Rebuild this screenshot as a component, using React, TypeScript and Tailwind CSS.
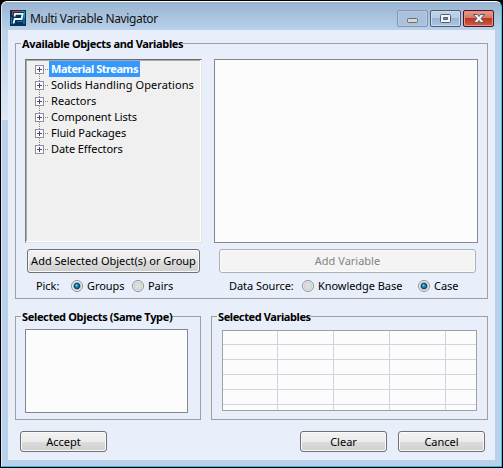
import React from "react";

function Group({ title, tracking, className, children }: { title: string; tracking: string; className: string; children: React.ReactNode }) {
  return (
    <section className={`relative shrink-0 border border-[#a0a0a0] ${className}`}>
      <h2 className={`absolute left-[5px] -top-[8px] h-4 whitespace-nowrap bg-[#e8effa] pl-px text-[11px] font-bold leading-4 text-black ${tracking}`}>{title}</h2>
      {children}
    </section>
  );
}

function Button({ label, className, disabled = false }: { label: string; className: string; disabled?: boolean }) {
  const look = disabled
    ? "border-[#adb2b5] bg-[#f4f4f4] text-[#838383]"
    : "border-[#707070] bg-[linear-gradient(#f2f2f2,#ebebeb_50%,#dddddd_50%,#cfcfcf)] text-black";
  return (
    <button disabled={disabled} className={`flex shrink-0 items-center justify-center whitespace-nowrap rounded-[3px] border text-[11px] leading-4 shadow-[inset_0_0_0_1px_#fafafa] ${look} ${className}`}>
      {label}
    </button>
  );
}

function Radio({ checked = false, className }: { checked?: boolean; className: string }) {
  return (
    <svg className={`h-3 w-3 shrink-0 ${className}`} viewBox="0 0 12 12">
      <circle cx="6" cy="6" r="5.5" fill="#f6f6f6" stroke="#8b8f94" />
      <circle cx="6" cy="6" r="3.8" fill={checked ? "#d5e5ee" : "#dedede"} stroke={checked ? "#a9b9c4" : "#c4c7ca"} strokeWidth="0.8" />
      {checked && <circle cx="6" cy="6" r="2.8" fill="#1479ab" stroke="#123c5b" />}
      {checked && <circle cx="5.5" cy="5.4" r="1.1" fill="#5ecbf0" />}
    </svg>
  );
}

const tree = [
  { name: "Material Streams", tracking: "tracking-[-0.45px]" },
  { name: "Solids Handling Operations", tracking: "tracking-[0.08px]" },
  { name: "Reactors", tracking: "tracking-[0.05px]" },
  { name: "Component Lists", tracking: "tracking-[-0.08px]" },
  { name: "Fluid Packages", tracking: "tracking-[-0.08px]" },
  { name: "Date Effectors", tracking: "tracking-[-0.08px]" },
];

function Expander({ first, last }: { first: boolean; last: boolean }) {
  return (
    <svg className="h-4 w-[14px] shrink-0" viewBox="0 0 14 16" shapeRendering="crispEdges">
      {!last && <path d="M4.5 13v3" stroke="#888" strokeDasharray="1 1" />}
      {!first && <path d="M4.5 1v3" stroke="#888" strokeDasharray="1 1" />}
      <path d="M10 8.5h4" stroke="#888" strokeDasharray="1 1" />
      <rect x="0.5" y="4.5" width="8" height="8" fill="#fafafa" stroke="#919191" />
      <path d="M2 8.5h5M4.5 6v5" stroke="#344f8c" />
    </svg>
  );
}

export default function App() {
  return (
    <main className="flex h-[468px] w-[503px] flex-col overflow-hidden bg-black font-['Noto_Sans',sans-serif]">
      <div className="m-px flex h-[466px] flex-col rounded-t-[6px] border border-l-[#dceaf7] border-r-[#35c5e7] border-t-white border-b-[#20c3ed] bg-[linear-gradient(#99b4d1,#b9d1ea_28px)]">
        <header className="flex h-7 shrink-0 items-start">
          <svg className="ml-2 mt-2 h-4 w-4" viewBox="0 0 16 16">
            <path d="M0 0h16v16H0z" fill="#07305a" />
            <path d="M13 3h2v11h-2z" fill="#0a6894" />
            <path d="M2.5 5V1.5H11" fill="none" stroke="#c9383c" />
            <path d="M11 1.5h3.5V8" fill="none" stroke="#2f9a8c" />
            <path d="M4.5 6.5L5 3.8h7.6l-1 5.200H4.600L3.500 13.500" fill="none" stroke="#f4faff" strokeWidth="1.8" />
            <path d="M1.5 7v7M7 11.5h6" fill="none" stroke="#0c79b6" />
          </svg>
          <h1 className="ml-1 mt-[5px] whitespace-nowrap text-[12px] leading-6 tracking-[-0.36px] text-[#111]">Multi Variable Navigator</h1>
          <div className="ml-auto mr-[7px] mt-2 flex gap-[2px]">
            <button className="h-[17px] w-[31px] rounded-[2px] border border-[#8296b1] bg-[#a9c1dc] shadow-[inset_0_0_0_1px_#b5cbe2]">
              <svg viewBox="0 0 29 15"><rect x="9.5" y="7.5" width="10" height="4" rx="1" fill="#d9d8d1" stroke="#6c6c70" /></svg>
            </button>
            <button className="h-[17px] w-[31px] rounded-[2px] border border-[#4a5c78] bg-[linear-gradient(#c0d5eb,#b4cbe4_50%,#9ab5d4_50%,#aec6e0)] shadow-[inset_0_0_0_1px_#c9ddf0]">
              <svg viewBox="0 0 29 15"><rect x="9.5" y="3.5" width="10" height="8" rx="1" fill="#f5f4f2" stroke="#585e6b" /><path d="M12.5 6.5h4v2h-4z" fill="#7992b5" stroke="#505c73" /></svg>
            </button>
            <button className="h-[17px] w-[31px] rounded-[2px] border border-[#551020] bg-[linear-gradient(#e69b8d,#d77460_50%,#bd3621_50%,#cf5e48)] shadow-[inset_0_0_0_1px_#e09688]">
              <svg viewBox="0 0 29 15"><path d="M9.5 3.5h4l1.5 2 1.5-2h4l-3.4 4 3.4 4h-4L15 9.5l-1.5 2h-4l3.4-4z" fill="#f6f4f3" stroke="#555b68" /></svg>
            </button>
          </div>
        </header>

        <div className="flex">
          <div className="h-[90px] w-[6px] shrink-0 bg-[linear-gradient(#b9d1ea,#dfe9f6)]" />
          <div className="flex h-[430px] w-[487px] shrink-0 flex-col bg-[#e8effa] pl-[7px] pt-[13px]">
            <Group title="Available Objects and Variables" tracking="tracking-[-0.34px]" className="h-[256px] w-[473px]">
              <div className="ml-[9px] mt-[15px] flex">
                <ul className="h-[184px] w-[177px] border border-b-[#e3e3e3] border-l-[#7c7c80] border-r-[#e3e3e3] border-t-[#6b6b70] bg-[#f0f0f0] pl-[9px] pt-px shadow-[inset_-1px_-1px_white,inset_1px_1px_#aaaaaa]">
                  {tree.map((item, i) => (
                    <li key={item.name} className="flex h-4">
                      <Expander first={i === 0} last={i === tree.length - 1} />
                      <span className={`h-4 whitespace-nowrap px-[2px] text-[11px] leading-4 ${item.tracking} ${i === 0 ? "bg-[#3399ff] font-bold text-white" : "text-black"}`}>{item.name}</span>
                    </li>
                  ))}
                </ul>
                <div className="ml-3 h-[184px] w-[264px] border border-[#828790] bg-[#fcfcfc]" />
              </div>
              <div className="ml-[11px] mt-[6px] flex gap-[19px]">
                <Button label="Add Selected Object(s) or Group" className="h-6 w-[173px]" />
                <Button label="Add Variable" disabled className="h-6 w-[257px]" />
              </div>
              <div className="ml-[20px] mt-[5px] flex h-4 items-center whitespace-nowrap text-[11px] leading-4 tracking-[-0.06px] text-black">
                <span className="w-[35px]">Pick:</span>
                <Radio checked className="mr-1" />
                <span className="w-[45px]">Groups</span>
                <Radio className="mr-1" />
                <span className="w-[81px]">Pairs</span>
                <span className="w-[73px]">Data Source:</span>
                <Radio className="mr-1" />
                <span className="w-[100px]">Knowledge Base</span>
                <Radio checked className="mr-1" />
                <span>Case</span>
              </div>
            </Group>

            <div className="mt-[17px] flex gap-[10px]">
              <Group title="Selected Objects (Same Type)" tracking="tracking-[-0.34px]" className="h-[104px] w-[186px]">
                <div className="ml-[9px] mt-3 h-[84px] w-[163px] border border-[#828790] bg-[#fcfcfc]" />
              </Group>
              <Group title="Selected Variables" tracking="tracking-[-0.4px]" className="h-[104px] w-[277px]">
                <div className="ml-[10px] mt-[13px] h-[81px] w-[255px] overflow-hidden border border-[#a0a0a0] bg-[#fcfcfc]">
                  {[0, 1, 2, 3, 4, 5].map((row) => (
                    <div key={row} className={`grid grid-cols-[55px_56px_56px_56px_30px] border-b border-[#cdd5e4] ${row === 0 ? "h-[14px]" : "h-[15px]"}`}>
                      {[0, 1, 2, 3, 4].map((column) => <span key={column} className={column < 4 ? "border-r border-[#cdd5e4]" : ""} />)}
                    </div>
                  ))}
                </div>
              </Group>
            </div>
            <footer className="ml-[5px] mt-[11px] flex">
              <Button label="Accept" className="h-[21px] w-[87px]" />
              <Button label="Clear" className="ml-[193px] h-[21px] w-[87px]" />
              <Button label="Cancel" className="ml-[11px] h-[21px] w-[87px]" />
            </footer>
          </div>
        </div>
      </div>
    </main>
  );
}
